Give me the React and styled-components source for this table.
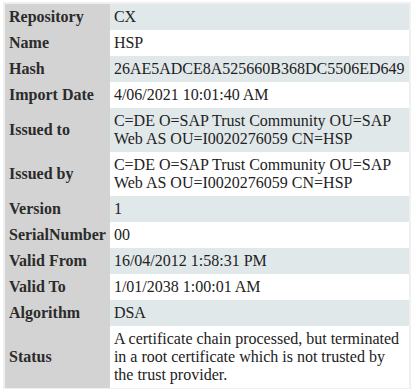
import React from "react";
import styled, { createGlobalStyle } from "styled-components";

const Global = createGlobalStyle`
  html, body { margin: 0; padding: 0; background: #ffffff; }
  body { font-family: "Liberation Serif", "Times New Roman", serif; }
`;

const Frame = styled.div`
  padding: 2px 0 0 3px;
  width: 408px;
  box-sizing: border-box;
`;

const Table = styled.table`
  width: 100%;
  border-collapse: collapse;
  border: 2px solid #f0f0f0;
  border-right-width: 2px;
  font-family: "Liberation Serif", "Times New Roman", serif;
  font-size: 16px;
  line-height: 18px;
`;

const Label = styled.th`
  background: #d3d3d3;
  color: #2b2b2b;
  font-weight: bold;
  text-align: left;
  vertical-align: middle;
  padding: 4px 4px;
  white-space: nowrap;
  width: 1px;
`;

const Value = styled.td`
  background: ${(p) => (p.$alt ? "#e1e8ea" : "#ffffff")};
  color: #222;
  padding: 4px 4px;
  vertical-align: middle;
`;

const rows = [
  ["Repository", "CX"],
  ["Name", "HSP"],
  ["Hash", "26AE5ADCE8A525660B368DC5506ED649"],
  ["Import Date", "4/06/2021 10:01:40 AM"],
  ["Issued to", "C=DE O=SAP Trust Community OU=SAP Web AS OU=I0020276059 CN=HSP"],
  ["Issued by", "C=DE O=SAP Trust Community OU=SAP Web AS OU=I0020276059 CN=HSP"],
  ["Version", "1"],
  ["SerialNumber", "00"],
  ["Valid From", "16/04/2012 1:58:31 PM"],
  ["Valid To", "1/01/2038 1:00:01 AM"],
  ["Algorithm", "DSA"],
  [
    "Status",
    "A certificate chain processed, but terminated in a root certificate which is not trusted by the trust provider.",
  ],
];

export default function App() {
  return (
    <>
      <Global />
      <Frame>
        <Table>
          <tbody>
            {rows.map(([k, v], i) => (
              <tr key={k}>
                <Label>{k}</Label>
                <Value $alt={i % 2 === 0}>{v}</Value>
              </tr>
            ))}
          </tbody>
        </Table>
      </Frame>
    </>
  );
}
